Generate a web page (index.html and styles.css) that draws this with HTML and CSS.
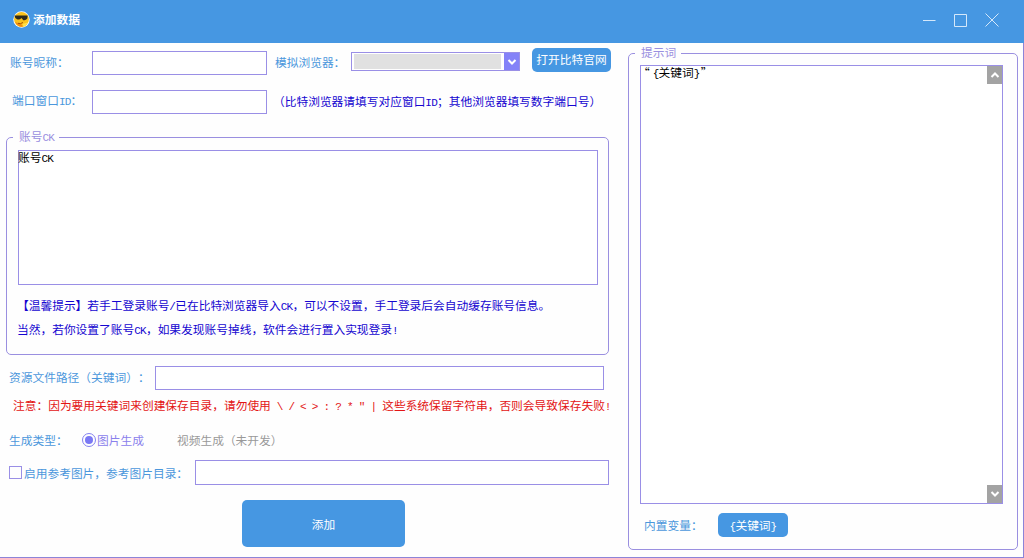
FILE: index.html
```html
<!DOCTYPE html>
<html lang="zh-CN">
<head>
  <meta charset="UTF-8">
  <title>添加数据</title>
  <meta name="viewport" content="width=device-width, initial-scale=1.0">
  <link rel="stylesheet" href="styles.css">
</head>
<body>
  <div class="window">
    <header class="titlebar">
      <svg class="logo" width="17" height="17" viewBox="0 0 17 17">
        <circle cx="8.5" cy="8.5" r="8.2" fill="#fff"/>
        <circle cx="8.5" cy="8.5" r="7.4" fill="#f9c21b"/>
        <path d="M2 11q3 5.500 8 4.600q-1-2.600-3.500-3z" fill="#ee8a12"/>
        <path d="M1.300 4.600h13.400l-.4 3q-1.500 2.200-4 1.600l-1.800-2.200q-2 2.200-4.500 1.200-2-.800-2.700-3.600z" fill="#2d2a1a"/>
        <path d="M5 12.300q2.500 1 5-.8" stroke="#a34d08" fill="none"/>
        <path d="M9.500 13l5-1.500-1.500 3.500-2.500.8z" fill="#ffe04a"/>
      </svg>
      <h1 class="title">添加数据</h1>
      <div class="controls">
        <svg width="14" height="14" viewBox="0 0 14 14"><path d="M0 7.500h12.500"/></svg>
        <svg width="14" height="14" viewBox="0 0 14 14"><path d="M.5 1.500h12v12H.5z"/></svg>
        <svg width="14" height="14" viewBox="0 0 14 14"><path d="M.5.500l13 13M13.500.500l-13 13"/></svg>
      </div>
    </header>

    <main class="content">
      <div class="left">
        <div class="row row-name">
          <label class="label" for="nick">账号昵称：</label>
          <input class="input short" id="nick" type="text">
          <span class="label browser-label">模拟浏览器：</span>
          <div class="select">
            <div class="select-value"></div>
            <div class="select-arrow">
              <svg width="10" height="8" viewBox="0 0 10 8"><path d="M1.500 2L5 5.500 8.500 2"/></svg>
            </div>
          </div>
          <button class="btn btn-site">打开比特官网</button>
        </div>

        <div class="row row-port">
          <label class="label" for="port">端口窗口<span class="en">ID</span>：</label>
          <input class="input short" id="port" type="text">
          <span class="hint">（比特浏览器请填写对应窗口<span class="en">ID</span>；其他浏览器填写数字端口号）</span>
        </div>

        <fieldset class="group group-ck">
          <legend>账号<span class="en">CK</span></legend>
          <div class="textarea">账号<span class="en">CK</span></div>
          <p class="tip">【温馨提示】若手工登录账号<span class="en">/</span>已在比特浏览器导入<span class="en">CK</span>，可以不设置，手工登录后会自动缓存账号信息。</p>
          <p class="tip">当然，若你设置了账号<span class="en">CK</span>，如果发现账号掉线，软件会进行置入实现登录<span class="en">!</span></p>
        </fieldset>

        <div class="row row-path">
          <label class="label" for="path">资源文件路径（关键词）：</label>
          <input class="input" id="path" type="text">
        </div>
        <p class="warning">注意：因为要用关键词来创建保存目录，请勿使用<span class="en"> \ / &lt; &gt; : ? * ″ | </span>这些系统保留字符串，否则会导致保存失败<span class="en">!</span></p>

        <div class="row row-type">
          <span class="label">生成类型：</span>
          <span class="radio"></span>
          <span class="radio-text">图片生成</span>
          <span class="disabled">视频生成（未开发）</span>
        </div>

        <div class="row row-ref">
          <span class="checkbox"></span>
          <label class="label" for="ref">启用参考图片，参考图片目录：</label>
          <input class="input" id="ref" type="text">
        </div>

        <button class="btn btn-add">添加</button>
      </div>

      <fieldset class="group group-prompt">
        <legend>提示词</legend>
        <div class="textarea prompt">
          <span class="prompt-text"><span class="quote quote-open">“</span><span class="en">{</span>关键词<span class="en">}</span><span class="quote">”</span></span>
          <div class="scrollbar">
            <div class="scroll-btn"><svg width="10" height="8" viewBox="0 0 10 8"><path d="M1.500 6L5 2.500 8.500 6"/></svg></div>
            <div class="scroll-btn"><svg width="10" height="8" viewBox="0 0 10 8"><path d="M1.500 2L5 5.500 8.500 2"/></svg></div>
          </div>
        </div>
        <div class="row row-var">
          <span class="label">内置变量：</span>
          <button class="btn btn-var"><span class="en">{</span>关键词<span class="en">}</span></button>
        </div>
      </fieldset>
    </main>
  </div>
</body>
</html>
```
FILE: styles.css
```css
* {
  margin: 0; padding: 0; box-sizing: border-box;
}
body {
  background: #fff; overflow: hidden;
  font-family: "Noto Sans CJK SC", sans-serif;
  font-size: 11.72px; line-height: 14px;
  text-spacing-trim: space-all;
}
.window {
  width: 1024px; height: 558px;
  border-right: 1px solid #8c84d8; border-bottom: 1px solid #8c84d8;
  background: #fefefe;
}
/* latin characters take half of a full-width cell */
.en {
  font-family: "Liberation Mono", monospace;
  font-size: 11px; line-height: 1; letter-spacing: -0.74px; white-space: pre;
}

/* title bar */
.titlebar {
  display: flex; align-items: center;
  width: 1024px; height: 43px; padding: 0 25px 5px 13px;
  background: #4697e2; color: #fff;
}
.title { margin-left: 3px; font-size: 11.72px; font-weight: bold; }
.controls { display: flex; gap: 17px; margin-left: auto; padding-top: 1px; }
.controls svg { fill: none; stroke: #d5e8fa; stroke-width: 1; }

.content { display: flex; }
.left { width: 628px; }
.row { display: flex; align-items: flex-start; white-space: nowrap; }
.label { color: #4b97dc; line-height: 24px; }
.input {
  display: block; height: 24px;
  border: 1px solid #9a8fe6; background: #fff; outline: none;
}
.short { width: 175px; }
.btn {
  border: none; border-radius: 5px; background: #4697e2; color: #fff;
  font-family: inherit; font-size: inherit; line-height: 14px; text-spacing-trim: inherit;
}

.row-name { margin-top: 5px; padding-left: 10px; height: 27px; }
.row-name .label { width: 82px; margin-top: 2px; }
.row-name .input { margin-top: 3px; }
.row-name .browser-label { width: 76px; margin-left: 8px; }
.select {
  display: flex; justify-content: space-between;
  width: 169px; height: 19px; margin-top: 4px; padding-left: 2px;
  border: 1px solid #9a8fe6; background: #fff;
}
.select-value { width: 147px; height: 15px; margin-top: 1px; background: #e1e1e1; }
.select-arrow {
  display: flex; align-items: center; justify-content: center;
  width: 15px; background: #8482f8;
}
.select-arrow svg, .scroll-btn svg { fill: none; stroke: #fff; stroke-width: 2; }
.btn-site { width: 79px; height: 24px; margin-left: 12px; padding-bottom: 2px; }

.row-port { margin-top: 15px; padding-left: 12px; }
.row-port .label { width: 80px; line-height: 20px; }
.hint { margin-left: 6px; color: #1505d0; line-height: 21px; }

/* bordered groups */
.group { border: 1px solid #9a8fe0; border-radius: 5px; }
.group legend { height: 14px; margin-left: -5px; padding: 0 5px 0 6px; color: #9a8fe0; line-height: 12px; }
.textarea { border: 1px solid #9a8fe6; background: #fff; color: #000; line-height: 11px; }
.group-ck { width: 603px; height: 225px; margin: 16px 0 0 6px; padding-left: 11px; }
.group-ck .textarea { width: 580px; height: 135px; margin-top: 6px; margin-bottom: 8px; text-indent: -1px; }
.tip { margin-left: -1px; color: #1505d0; line-height: 23.500px; white-space: nowrap; }

.row-path { margin-top: 11px; padding-left: 9px; }
.row-path .label { width: 146px; line-height: 22px; }
.row-path .input { width: 449px; }
.warning { margin: 8px 0 0 13px; color: #e31515; white-space: nowrap; }

.row-type { align-items: center; height: 24px; margin-top: 15px; padding-left: 9px; }
.row-type .label { width: 73px; line-height: 22px; }
.radio {
  display: flex; align-items: center; justify-content: center;
  width: 14px; height: 14px; border: 1px solid #8482f0; border-radius: 50%;
}
.radio::before { content: ""; width: 8px; height: 8px; border-radius: 50%; background: #7a78f4; }
.radio-text { width: 80px; margin-left: 1px; color: #8a80ec; }
.disabled { color: #999; }

.row-ref { align-items: center; margin-top: 8px; padding-left: 9px; }
.checkbox { width: 13px; height: 13px; border: 1px solid #9a8fe6; }
.row-ref .label { width: 171px; margin-left: 2px; }
.row-ref .input { width: 414px; height: 25px; }

.btn-add { display: block; width: 163px; height: 47px; margin: 15px 0 0 242px; }

.group-prompt { width: 390px; height: 504px; margin-top: 3px; padding-left: 11px; }
.prompt { display: flex; justify-content: space-between; width: 363px; height: 439px; margin-top: 5px; }
.quote { display: inline-block; width: 11.720px; text-indent: 1px; }
.quote-open { text-indent: -3px; }
.scrollbar { display: flex; flex-direction: column; justify-content: space-between; }
.scroll-btn {
  display: flex; align-items: center; justify-content: center;
  width: 15px; height: 18px; background: #a3a3a3;
}
.row-var { margin-top: 9px; padding-left: 4px; }
.row-var .label { width: 74px; }
.btn-var { width: 70px; height: 24px; }
```
